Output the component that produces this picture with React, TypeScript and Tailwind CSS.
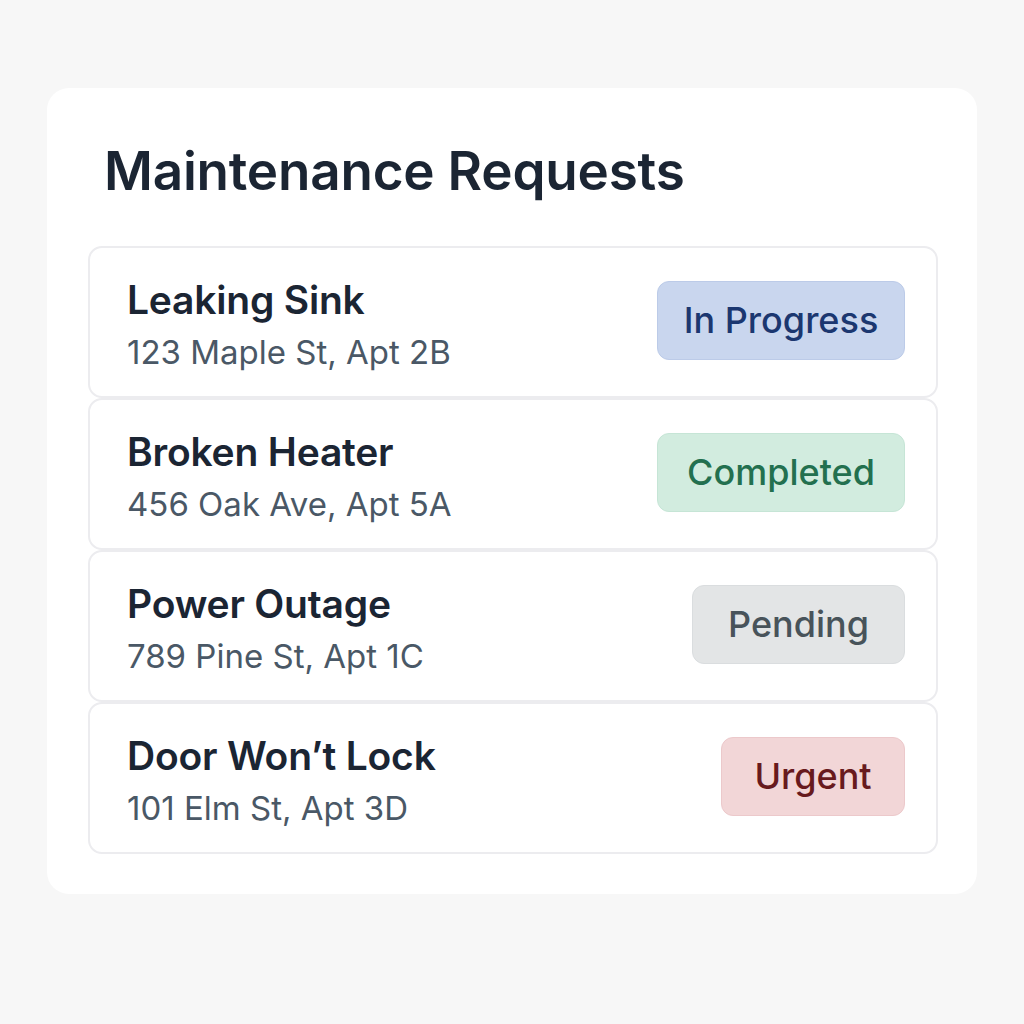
import React from 'react';

interface IRequest {
  title: string;
  address: string;
  status: string;
  badgeClass: string;
}

const requests: IRequest[] = [
  {
    title: 'Leaking Sink',
    address: '123 Maple St, Apt 2B',
    status: 'In Progress',
    badgeClass: 'w-[248px] bg-[#c9d6ee] text-[#1b3770] border-[#bccbe8]',
  },
  {
    title: 'Broken Heater',
    address: '456 Oak Ave, Apt 5A',
    status: 'Completed',
    badgeClass: 'w-[248px] bg-[#d2ecdf] text-[#23704f] border-[#c6e5d6]',
  },
  {
    title: 'Power Outage',
    address: '789 Pine St, Apt 1C',
    status: 'Pending',
    badgeClass: 'w-[213px] bg-[#e3e5e6] text-[#48535a] border-[#dadddf]',
  },
  {
    title: 'Door Won\u2019t Lock',
    address: '101 Elm St, Apt 3D',
    status: 'Urgent',
    badgeClass: 'w-[184px] bg-[#f2d6d7] text-[#681a1d] border-[#ecc9cb]',
  },
];

const RequestRow = ({ title, address, status, badgeClass }: IRequest) => {
  return (
    <div className="flex h-[152px] items-center justify-between rounded-[14px] border-2 border-[#ececef] bg-white pl-[37px] pr-[31px]">
      <div className="flex flex-col pt-[6px]">
        <span className="text-[39px] font-semibold leading-[48px] tracking-[-0.2px] text-[#1b2533]">{title}</span>
        <span className="mt-[6px] text-[33px] font-normal leading-[44px] text-[#4a5866]">{address}</span>
      </div>
      <span
        className={`-mt-[4px] flex h-[79px] items-center justify-center rounded-[12px] border text-[36px] font-medium ${badgeClass}`}
      >
        {status}
      </span>
    </div>
  );
};

const App = () => {
  return (
    <div
      className="min-h-[1024px] w-full bg-[#f7f7f7] pl-[47px] pt-[88px]"
      style={{ fontFamily: 'Inter, "Noto Sans", sans-serif' }}
    >
      <div className="flex h-[806px] w-[930px] flex-col rounded-[22px] bg-white pl-[41px] pr-[39px] pt-[53px]">
        <h1 className="mb-[45px] pl-[16px] text-[53px] font-semibold leading-[60px] tracking-[-0.2px] text-[#1b2533]">
          Maintenance Requests
        </h1>
        <div className="flex flex-col">
          {requests.map((r) => (
            <RequestRow key={r.title} {...r} />
          ))}
        </div>
      </div>
    </div>
  );
};

export default App;
